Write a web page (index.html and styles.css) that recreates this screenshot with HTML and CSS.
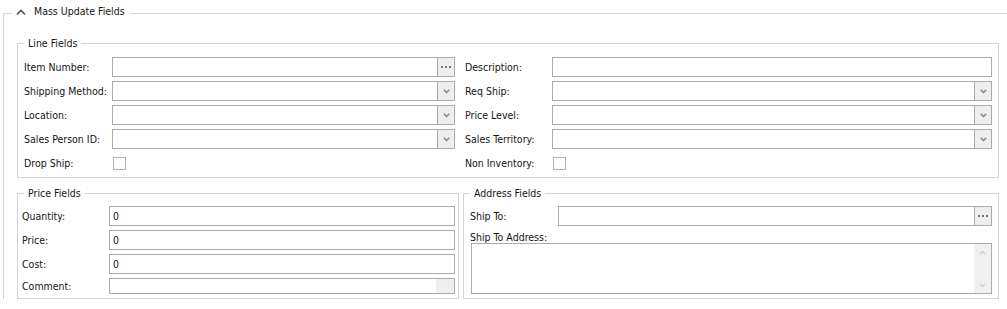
FILE: index.html
```html
<!DOCTYPE html>
<html>
<head>
    <meta charset="utf-8">
    <title>Mass Update Fields</title>
    <link rel="stylesheet" href="styles.css">
</head>
<body>
    <fieldset class="group outer">
        <legend class="outer-legend">
            <svg class="collapse" width="10" height="6" viewBox="0 0 10 6"><path d="M1 5.5 L5 1.5 L9 5.5" fill="none" stroke="#555" stroke-width="1.6"/></svg>
            <span>Mass Update Fields</span>
        </legend>

        <fieldset class="group line-fields">
            <legend>Line Fields</legend>
            <div class="line-grid">
                <label>Item Number:</label>
                <div class="edit">
                    <input type="text">
                    <span class="btn"><svg width="10" height="2" viewBox="0 0 10 2"><rect x="0" y="0" width="2" height="2" fill="#777"/><rect x="4" y="0" width="2" height="2" fill="#777"/><rect x="8" y="0" width="2" height="2" fill="#777"/></svg></span>
                </div>
                <label>Description:</label>
                <div class="edit"><input type="text"></div>

                <label>Shipping Method:</label>
                <div class="edit">
                    <input type="text">
                    <span class="btn"><svg width="7" height="5" viewBox="0 0 7 5"><path d="M0.8 0.8 L3.5 3.5 L6.2 0.8" fill="none" stroke="#8a8a8a" stroke-width="1.6"/></svg></span>
                </div>
                <label>Req Ship:</label>
                <div class="edit">
                    <input type="text">
                    <span class="btn"><svg width="7" height="5" viewBox="0 0 7 5"><path d="M0.8 0.8 L3.5 3.5 L6.2 0.8" fill="none" stroke="#8a8a8a" stroke-width="1.6"/></svg></span>
                </div>

                <label>Location:</label>
                <div class="edit">
                    <input type="text">
                    <span class="btn"><svg width="7" height="5" viewBox="0 0 7 5"><path d="M0.8 0.8 L3.5 3.5 L6.2 0.8" fill="none" stroke="#8a8a8a" stroke-width="1.6"/></svg></span>
                </div>
                <label>Price Level:</label>
                <div class="edit">
                    <input type="text">
                    <span class="btn"><svg width="7" height="5" viewBox="0 0 7 5"><path d="M0.8 0.8 L3.5 3.5 L6.2 0.8" fill="none" stroke="#8a8a8a" stroke-width="1.6"/></svg></span>
                </div>

                <label>Sales Person ID:</label>
                <div class="edit">
                    <input type="text">
                    <span class="btn"><svg width="7" height="5" viewBox="0 0 7 5"><path d="M0.8 0.8 L3.5 3.5 L6.2 0.8" fill="none" stroke="#8a8a8a" stroke-width="1.6"/></svg></span>
                </div>
                <label>Sales Territory:</label>
                <div class="edit">
                    <input type="text">
                    <span class="btn"><svg width="7" height="5" viewBox="0 0 7 5"><path d="M0.8 0.8 L3.5 3.5 L6.2 0.8" fill="none" stroke="#8a8a8a" stroke-width="1.6"/></svg></span>
                </div>

                <label>Drop Ship:</label>
                <div class="check-cell"><span class="check"></span></div>
                <label>Non Inventory:</label>
                <div class="check-cell"><span class="check"></span></div>
            </div>
        </fieldset>

        <div class="bottom-row">
            <fieldset class="group price-fields">
                <legend>Price Fields</legend>
                <div class="price-grid">
                    <label>Quantity:</label>
                    <div class="edit"><input type="text" value="0"></div>
                    <label>Price:</label>
                    <div class="edit"><input type="text" value="0"></div>
                    <label>Cost:</label>
                    <div class="edit"><input type="text" value="0"></div>
                    <label class="short">Comment:</label>
                    <div class="edit short"><input type="text"><span class="memo-bar"></span></div>
                </div>
            </fieldset>

            <fieldset class="group address-fields">
                <legend>Address Fields</legend>
                <div class="address-grid">
                    <label>Ship To:</label>
                    <div class="edit">
                        <input type="text">
                        <span class="btn"><svg width="10" height="2" viewBox="0 0 10 2"><rect x="0" y="0" width="2" height="2" fill="#777"/><rect x="4" y="0" width="2" height="2" fill="#777"/><rect x="8" y="0" width="2" height="2" fill="#777"/></svg></span>
                    </div>
                </div>
                <div class="memo-label">Ship To Address:</div>
                <div class="memo">
                    <div class="memo-text"></div>
                    <div class="scroll">
                        <svg width="7" height="5" viewBox="0 0 7 5"><path d="M0.8 4.2 L3.5 1.5 L6.2 4.2" fill="none" stroke="#cfcfcf" stroke-width="1.4"/></svg>
                        <svg width="7" height="5" viewBox="0 0 7 5"><path d="M0.8 0.8 L3.5 3.5 L6.2 0.8" fill="none" stroke="#cfcfcf" stroke-width="1.4"/></svg>
                    </div>
                </div>
            </fieldset>
        </div>
    </fieldset>
</body>
</html>
```

FILE: styles.css
```css
body {
    margin: 0;
    background-color: white;
    color: #151515;
    font-family: "DejaVu Sans Condensed", "DejaVu Sans", sans-serif;
    font-stretch: condensed;
    font-size: 10.5px;
}
fieldset.group {
    border: 1px solid #d4d4d4;
    margin: 0;
    min-width: 0;
}
fieldset.group legend {
    padding: 0 4px;
    line-height: 14px;
}
fieldset.outer {
    margin-left: 3px;
    border-right: none;
    border-bottom: none;
    padding: 10px 8px 0 13px;
}
legend.outer-legend {
    margin-left: -5px;
    padding: 0 5px 3px 4px !important;
    line-height: 23px !important;
    display: flex;
    align-items: center;
}
legend.outer-legend .collapse {
    margin-right: 8px;
    margin-top: 1px;
}
fieldset.line-fields {
    padding: 7px 6px 4px 6px;
}
.line-grid {
    display: grid;
    grid-template-columns: 88px 343px 97px 440px;
    grid-auto-rows: 20px;
    row-gap: 4px;
}
.line-grid label:nth-child(4n+3) {
    margin-left: 10px;
}
label, .memo-label {
    display: flex;
    align-items: center;
    white-space: nowrap;
}
.edit {
    display: flex;
    border: 1px solid #ababab;
    background-color: white;
    box-sizing: border-box;
    height: 20px;
}
.edit input {
    flex: 1;
    min-width: 0;
    border: none;
    outline: none;
    padding: 0 3px;
    margin: 0;
    font: inherit;
    color: inherit;
    background: transparent;
}
.edit .btn {
    width: 16px;
    border-left: 1px solid #ababab;
    background-color: #eeeeee;
    display: flex;
    align-items: center;
    justify-content: center;
}
.check-cell {
    display: flex;
    align-items: center;
    padding-left: 1px;
}
.check {
    width: 13px;
    height: 13px;
    box-sizing: border-box;
    border: 1px solid #b4b4b4;
    background: white;
}
.bottom-row {
    display: grid;
    grid-template-columns: 442px 1fr;
    column-gap: 4px;
    margin-top: 8px;
}
fieldset.price-fields {
    padding: 6px 3px 4px 4px;
}
fieldset.price-fields legend {
    margin-left: 2px;
}
.price-grid {
    display: grid;
    grid-template-columns: 87px 1fr;
    grid-template-rows: 20px 20px 20px 16px;
    row-gap: 4px;
}
.edit.short {
    height: 16px;
}
.memo-bar {
    width: 18px;
    background-color: #efefef;
}
fieldset.address-fields {
    padding: 6px 6px 4px 6px;
}
.address-grid {
    display: grid;
    grid-template-columns: 88px 1fr;
    grid-auto-rows: 20px;
}
.memo-label {
    height: 13px;
    margin-top: 4px;
}
.memo {
    display: flex;
    height: 51px;
    margin-left: 1px;
    border: 1px solid #ababab;
    box-sizing: border-box;
}
.memo-text {
    flex: 1;
}
.memo .scroll {
    width: 17px;
    background-color: #f0f0f0;
    display: flex;
    flex-direction: column;
    justify-content: space-between;
    align-items: center;
    padding: 6px 0 5px;
}
```
